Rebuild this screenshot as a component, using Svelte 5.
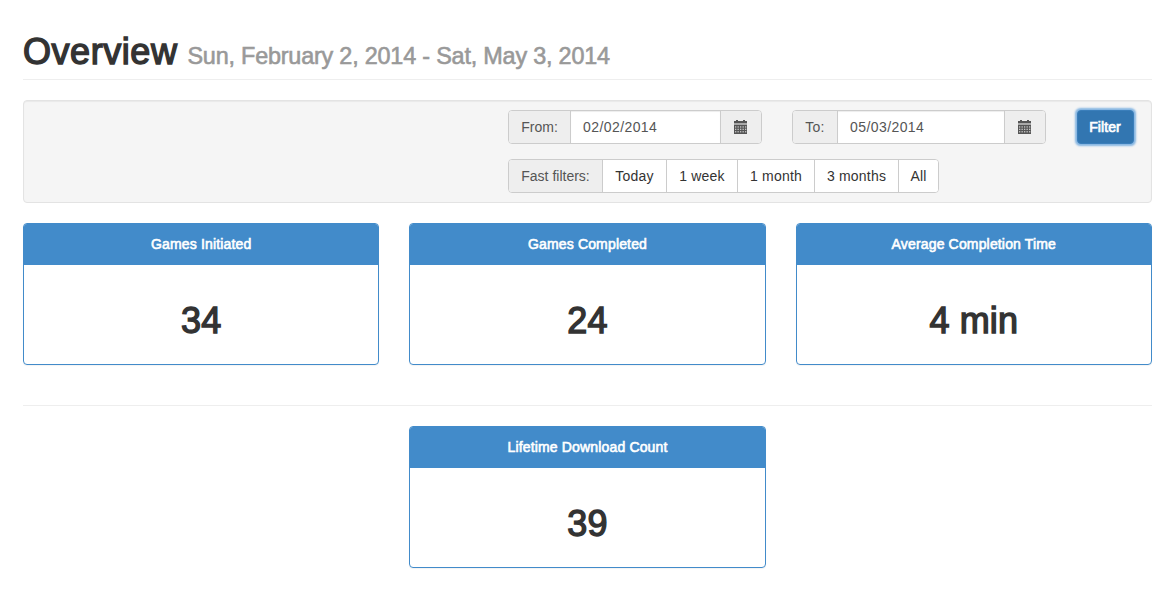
<script>
  const dates = [
    { key: 'from', label: 'From:', value: '02/02/2014' },
    { key: 'to', label: 'To:', value: '05/03/2014' }
  ];
  const ranges = [
    { label: 'Today', key: 'today' },
    { label: '1 week', key: 'week' },
    { label: '1 month', key: 'month' },
    { label: '3 months', key: 'quarter' },
    { label: 'All', key: 'all' }
  ];
  const stats = [
    { title: 'Games Initiated', value: '34' },
    { title: 'Games Completed', value: '24' },
    { title: 'Average Completion Time', value: '4 min' }
  ];
  const columns = [1.5, 4, 6.5, 9, 11.5];
</script>

{#snippet panel(stat)}
  <section class="panel">
    <h3>{stat.title}</h3>
    <div class="value">{stat.value}</div>
  </section>
{/snippet}

<main>
  <header>
    <h1>Overview</h1>
    <small>Sun, February 2, 2014 - Sat, May 3, 2014</small>
  </header>

  <div class="well">
    <div class="row">
      {#each dates as date}
        <div class="group {date.key}">
          <span class="addon label">{date.label}</span>
          <span class="input">{date.value}</span>
          <span class="addon pick">
            <svg width="14" height="14" viewBox="0 0 14 14" fill="#555">
              <path d="M2 0h2v1h5V0h2v1h2v2H0V1h2z" />
              <path d="M0 3h13v2H0z" opacity=".45" />
              <path d="M0 5h13v9H0z" />
              {#each [6.3, 8.7, 11.1] as y}
                {#each columns as x}
                  <rect x={x - 0.5} {y} width="1.3" height="1.3" fill="#eee" opacity=".75" />
                {/each}
              {/each}
            </svg>
          </span>
        </div>
      {/each}
      <button class="filter">Filter</button>
    </div>
    <div class="group fast">
      <span class="addon label">Fast filters:</span>
      {#each ranges as range}
        <button class={range.key}>{range.label}</button>
      {/each}
    </div>
  </div>

  <div class="stats">
    {#each stats as stat}
      {@render panel(stat)}
    {/each}
  </div>
  <hr />
  <div class="stats lifetime">
    {@render panel({ title: 'Lifetime Download Count', value: '39' })}
  </div>
</main>

<style>
  :global(body) { margin: 0; background: #fff; }
  main, button {
    font-family: "Liberation Sans", Arial, sans-serif;
    font-size: 14px;
    line-height: 20px;
    color: #333;
  }
  main, main * { box-sizing: border-box; }
  main { padding: 32px 20px 0 23px; height: 595px; }
  header {
    display: flex;
    align-items: baseline;
    height: 48px;
    border-bottom: 1px solid #eee;
    white-space: nowrap;
  }
  h1 {
    margin: 0;
    font-size: 36px;
    font-weight: 400;
    line-height: 40px;
    letter-spacing: .55px;
    -webkit-text-stroke: 1.4px #333;
  }
  small {
    margin-left: 10px;
    font-size: 23.4px;
    line-height: 24px;
    letter-spacing: -.2px;
    color: #999;
    -webkit-text-stroke: .6px #999;
  }
  .well {
    display: flex;
    flex-direction: column;
    gap: 15px;
    height: 103px;
    margin: 20px 0;
    padding: 9px 16px 9px 484px;
    background: #f5f5f5;
    border: 1px solid #e3e3e3;
    border-radius: 4px;
    box-shadow: inset 0 1px 1px rgba(0, 0, 0, .05);
  }
  .row { display: flex; }
  .group {
    display: flex;
    height: 34px;
    width: 254px;
    margin-right: 30px;
    border: 1px solid #ccc;
    border-radius: 4px;
    background: #fff;
    overflow: hidden;
    flex: none;
  }
  .addon {
    display: flex;
    align-items: center;
    justify-content: center;
    background: #eee;
    color: #555;
    flex: none;
  }
  .label { border-right: 1px solid #ccc; padding-bottom: 1px; }
  .from .label { width: 62px; }
  .to .label { width: 45px; letter-spacing: .3px; }
  .fast .label { width: 94px; }
  .input {
    flex: 1;
    padding: 6px 12px;
    color: #555;
    letter-spacing: .42px;
    box-shadow: inset 0 1px 1px rgba(0, 0, 0, .075);
  }
  .pick { width: 41px; border-left: 1px solid #ccc; }
  .pick svg { display: block; }
  .fast { width: 431px; }
  .fast button {
    flex: none;
    padding: 0 0 1px;
    border: 0;
    border-right: 1px solid #ccc;
    background: #fff;
    letter-spacing: .2px;
  }
  .today { width: 64px; }
  .week { width: 71px; }
  .month { width: 77px; }
  .quarter { width: 84px; }
  .fast .all { width: 39px; border-right: 0; }
  .filter {
    width: 57px;
    height: 34px;
    margin-left: 1px;
    padding: 0 1px 1px 0;
    border: 1px solid #3b7fbb;
    border-radius: 4px;
    background: #3276b1;
    color: #fff;
    letter-spacing: .1px;
    -webkit-text-stroke: .7px #fff;
    box-shadow: 0 0 2px 1.5px #86b6e2;
  }
  .stats { display: grid; grid-template-columns: repeat(3, 1fr); gap: 30px; }
  .lifetime .panel { grid-column: 2; }
  .panel {
    height: 142px;
    border: 1px solid #428bca;
    border-radius: 4px;
    text-align: center;
    box-shadow: 0 1px 1px rgba(0, 0, 0, .05);
    overflow: hidden;
  }
  .panel h3 {
    height: 41px;
    margin: 0;
    padding: 10px 0;
    background: #428bca;
    color: #fff;
    font-size: 14px;
    font-weight: 400;
    line-height: 20px;
    letter-spacing: .16px;
    -webkit-text-stroke: .6px #fff;
  }
  .value {
    padding-top: 36px;
    font-size: 36px;
    line-height: 40px;
    letter-spacing: .1px;
    -webkit-text-stroke: 1.4px #333;
  }
  hr { height: 1px; margin: 40px 0 20px; border: 0; background: #eee; }
</style>
